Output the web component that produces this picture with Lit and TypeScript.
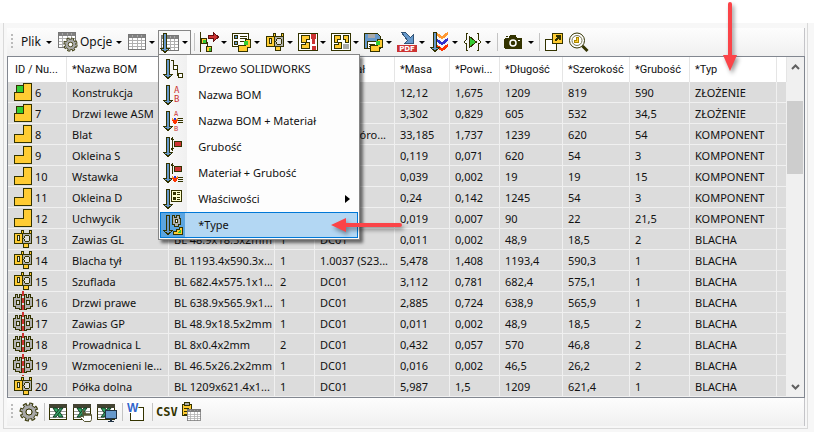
import { LitElement, html, svg, css, nothing } from "lit";
import type { TemplateResult } from "lit";
import { customElement } from "lit/decorators.js";

const INK = "#333300";
const GOLD = "#ffcc33";
const GREEN = "#33cc33";
const RED = "#cc3333";
const BLUE = "#6699cc";
const GREY = "#b2b2b2";

const sheetMetal = svg`
  <g stroke=${INK}>
    <path d="M7.5.5h2v3h-2zM15.5.5h2v3h-2z" fill=${GOLD} />
    <path d="M.5 3.5h8v10h-8z" fill=${GOLD} />
    <path d="M3.5 5.5h2v5h-2z" fill="#e8e8e8" />
    <path d="M8.5 3.5h9v10h-9z" fill=${GREY} />
    <path d="M9.5 13.5h5v4h-5z" fill=${GOLD} />
    <circle cx="13" cy="8.5" r="3" fill="#e0e0e0" />
  </g>`;

const downArrow = svg`<path d="M3.5.5h3v15h3l-4.5 4-4.5-4h3z" fill=${BLUE} stroke=${INK} />`;

const gridTable = svg`
  <path d="M0 0h18v16H0z" fill="#fff" />
  <path d="M4.5 4v12M9.5 4v12M13.5 4v12M0 6.5h18M0 9.5h18M0 12.5h18" stroke="#b0b0b0" />
  <path d="M0 0h18v4H0z" fill="#808080" />
  <path d="M4.5 1v2M9.5 1v2M13.5 1v2" stroke="#a8a8a8" />
  <path d="M.5.5h17v15H.5z" fill="none" stroke="#777" />`;

const gear = svg`
  <g fill="none" shape-rendering="auto">
    <circle cx="10" cy="10" r="7.5" stroke=${INK} stroke-width="4" stroke-dasharray="3.6 2.29" />
    <circle cx="10" cy="10" r="5" stroke=${INK} stroke-width="5" />
    <circle cx="10" cy="10" r="7" stroke="#a8a8a8" stroke-width="3" stroke-dasharray="1.8 3.7" stroke-dashoffset="-.7" />
    <circle cx="10" cy="10" r="5" stroke="#a8a8a8" stroke-width="3.4" />
    <circle cx="10" cy="10" r="3" stroke=${INK} fill="#fff" />
  </g>`;

const part = svg`<path d="M9.5.5h8v17H.5v-8h9z" fill=${GOLD} stroke=${INK} />`;
const smallPart = svg`
  <path d="M13.5 7.5h5v8h-3v4h-9v-6h7z" fill=${GOLD} stroke=${INK} />
  <path d="M12 9h4v4h-4z" fill=${GREEN} />`;

const excel = svg`
  <path d="M.5 1.5h17v15H.5z" fill="#fff" stroke=${INK} />
  <path d="M0 1h18v4H0z" fill="#444433" />
  <path d="M1 8.5h16M1 11.5h16M1 14.5h16" stroke="#999" />
  <path d="M4 5h4l6 9h-4z" fill="#33aa66" stroke="#123f22" shape-rendering="auto" />
  <path d="M11 5h3l-7 9H4z" fill="#339966" stroke="#123f22" shape-rendering="auto" />`;

const lines = (y: number) => svg`<path d="M15 ${y}.5h5M15 ${y + 2}.5h5M15 ${y + 4}.5h5" stroke=${INK} />`;
const flame = (y: number) => svg`
  <path d="M9 ${y}l3 5 3-5-2 2-1-2-1 2z" fill="#ff9933" stroke="#ff9933" />
  <path d="M10 ${y + 2}l2 3 2-3" fill="none" stroke="#ff3300" stroke-width="2" />
  <path d="M11 ${y + 1}h2" stroke="#3333cc" stroke-width="2" />`;

const icons: Record<string, TemplateResult> = {
  part: svg`${part}`,
  assembly: svg`${part}<path d="M2.5 2.5h7v7h-7z" fill=${GREEN} stroke=${INK} />`,
  sheet: svg`${sheetMetal}`,
  mirror: svg`
    <path d="M10 -2v22" stroke=${RED} stroke-width="2" stroke-dasharray="5 2" />
    <g fill=${GREY} stroke=${INK}>
      <path d="M2.5 4.5v-3h2v3h2v-3h2v15h-2v-1h-4v-2h-2v-9z" />
      <path d="M17.5 4.5v-3h-2v3h-2v-3h-2v15h2v-1h4v-2h2v-9z" />
      <path d="M3.5 7.5h3v4h-3zM13.5 7.5h3v4h-3z" fill="#ddd" />
    </g>`,
  options: svg`${gridTable}<g transform="translate(5 5) scale(.75)">${gear}</g>`,
  table: svg`<g transform="translate(1 2)">${gridTable}</g>`,
  sort: svg`<g transform="translate(1 2)">${gridTable}</g>${downArrow}`,
  tree: svg`
    <path d="M1.5 0v20M2 7.5h4M8.500 10v7h4" fill="none" stroke=${INK} />
    <path d="M2.5 6.5h5v5h-5zM7.5 14.5h5v5h-5z" fill=${GOLD} stroke=${INK} />
    <path d="M4 8h3v3h-3zM10 16h2v3h-2z" fill=${GREEN} />
    <path d="M9.5 3.5h5v-3l5 4.5-5 4.5v-3h-5z" fill=${RED} stroke="#661111" />`,
  form: svg`
    <path d="M.5 1.5h16v13H.5z" fill="#fff" stroke=${INK} />
    <path d="M2.5 3.5h3v3h-3zM2.5 9.5h3v3h-3z" fill=${BLUE} stroke=${INK} />
    <path d="M8 4.5h7M8 6.5h7M8 9.5h5" stroke=${INK} />${smallPart}`,
  sheetBig: svg`<g transform="translate(1 1)">${sheetMetal}</g>`,
  warn: svg`
    <path d="M.5 1.5h19v17H.5z" fill="#fff" stroke=${INK} />
    <path d="M3.5 3.5h8v4h-3v3h-5zM3.5 12.5h4v-2h4v6h-8z" fill=${GOLD} stroke=${INK} />
    <path d="M13 2h5l-1 10h-3zM14 14h4v4h-4z" fill=${RED} />`,
  layout: svg`
    <path d="M.5 1.5h19v17H.5z" fill="#fff" stroke=${INK} />
    <path d="M3.5 3.5h6v4h-3v3h-3zM12.5 3.5h5v7h-3v-3h-2zM3.5 12.5h4v-2h3v6h-7z" fill=${GOLD} stroke=${INK} />
    <path d="M12 12h6v5h-6z" fill="#aaa" />`,
  save: svg`
    <path d="M.5 1.5h13l3 3v12H.5z" fill=${BLUE} stroke=${INK} />
    <path d="M4 2h7v4h-7z" fill="#aaa" /><path d="M3.5 9.5h9v7h-9z" fill="#fff" stroke=${INK} />
    <path d="M5 12.5h6M5 14.5h6" stroke=${INK} />${smallPart}`,
  pdf: svg`
    <path d="M4.5.5h4l5 5 3-3v9h-9l3-3z" fill=${BLUE} stroke="#335577" />
    <path d="M0 13h20v7H0z" fill=${RED} />
    <text x="10" y="19" text-anchor="middle" font-family="DejaVu Sans" font-size="7" font-weight="bold" fill="#fff">PDF</text>`,
  layers: svg`
    <g fill="none" stroke-width="2.5">
      <path d="M7 2l5 4 6-5" stroke="#ff9933" /><path d="M7 8l5 4 6-5" stroke="#3333cc" />
      <path d="M7 14l5 4 6-5" stroke="#ff3300" />
    </g>${downArrow}`,
  play: svg`
    <path d="M5 1.5H3.5v6L1 10l2.5 2v6.500H5M14 1.500h1.500v6l2.500 2.500-2.500 2v6.500H14" fill="none" stroke=${INK} />
    <path d="M6.5 4.500l7 5.500-7 5.500z" fill=${GREEN} stroke=${INK} />`,
  camera: svg`
    <path d="M8 3h6l1 3h4l1 1v9l-1 1H3l-1-1V7l1-1h4z" fill=${INK} />
    <circle cx="11" cy="11" r="3" fill=${INK} stroke="#fff" stroke-width="1.500" shape-rendering="auto" />
    <path d="M4 4h2v1H4z" fill=${INK} /><path d="M16 8h2v1h-2z" fill="#fff" />`,
  popout: svg`
    <path d="M1.500 7.500h11v11h-11z" fill="#fff" stroke=${INK} />
    <path d="M8.500 1.500h10v10h-10z" fill=${GOLD} stroke=${INK} />
    <path d="M11 9l5-5M12 4h4v4" fill="none" stroke=${INK} stroke-width="1.500" />`,
  search: svg`
    <g shape-rendering="auto">
      <circle cx="9" cy="8.500" r="7.500" fill="#fff" stroke=${INK} />
      <circle cx="9" cy="8.500" r="5" fill="none" stroke="#777755" />
      <path d="M14.500 14l5 5" stroke=${INK} stroke-width="3" />
    </g>
    <path d="M8.500 5.500h2v5h-4v-2h2z" fill=${GOLD} stroke="#aa8800" />`,
  mTree: svg`${downArrow}<path d="M7.500 1.500h3v7h4v8h3" fill="none" stroke=${INK} />
    <path d="M10.500 6.500h4v4h-4zM15.500 14.500h4v4h-4z" fill="#fff" stroke=${INK} />`,
  mName: svg`${downArrow}<g font-family="DejaVu Sans Mono" font-size="9" fill=${RED}><text x="11" y="8">A</text><text x="11" y="17">B</text></g>`,
  mNameMat: svg`${downArrow}<g font-family="DejaVu Sans Mono" font-size="7" fill=${RED}><text x="11" y="5">A</text><text x="11" y="20">B</text></g>${flame(7)}${lines(7)}`,
  mThick: svg`${downArrow}<path d="M9.500 1v12M8 3l1.500-2L11 3M8 11l1.500 2 1.500-2" fill="none" stroke=${INK} /><path d="M11.500 4.500h7v5h-7z" fill=${RED} stroke=${INK} />`,
  mMatThick: svg`${downArrow}<path d="M9.500 1v10M8 3l1.500-2L11 3" fill="none" stroke=${INK} /><path d="M11.500 3.500h7v5h-7z" fill=${RED} stroke=${INK} />${flame(13)}${lines(14)}`,
  mProps: svg`${downArrow}<path d="M8.500 1.500h10v11h-10z" fill="#ffffcc" stroke=${INK} /><path d="M10 3h3v3h-3zM10 8h3v3h-3z" fill=${INK} /><path d="M14 3.500h3M14 5.500h3M14 8.500h3M14 10.500h3" stroke=${INK} />`,
  mType: svg`${downArrow}
    <path d="M9.500 3.500v-3h2v2h2v-2h3v3h1v6h-2v2h-4v-2h-2z" fill=${GREY} stroke=${INK} />
    <path d="M12.500 4.500h2v3h-2z" fill="#fff" stroke=${INK} />
    <path d="M10.500 19.500v-3h3v-2h3v-2h3v7z" fill=${GOLD} stroke=${INK} /><path d="M14 18l4-4v4z" fill=${GREEN} />`,
  gear: svg`${gear}`,
  excel: svg`<g transform="translate(0 1)">${excel}</g>`,
  excelHand: svg`<g transform="translate(0 1)">${excel}</g>
    <path d="M9.500 9.500v-1h1v5h1v-3h1v3h1v-2h1v2h1v-2h1v2h1v-1h1v5l-1 2h-6l-4-4v-1h2l1 1z" fill="#fff" stroke="#555533" shape-rendering="auto" />`,
  excelScreen: svg`<g transform="translate(0 1)">${excel}</g>
    <path d="M8.500 8.500h11v8h-11z" fill=${BLUE} stroke="#223344" /><path d="M13 17h2v2h2v1h-6v-1h2z" fill="#223344" />`,
  word: svg`<path d="M3.500 5.500h13v13h-13z" fill="#fff" stroke=${INK} />
    <text x="0" y="10" font-family="Liberation Sans" font-size="12" font-weight="bold" fill="#3366cc" stroke="#fff" stroke-width="2" paint-order="stroke">W</text>`,
  clipboard: svg`
    <path d="M1.500 2.500h9v11h-9z" fill=${GOLD} stroke=${INK} /><path d="M3.500.5h5v3h-5z" fill="#aaa" stroke=${INK} />
    <path d="M3 6.500h5M3 9.500h3M3 12.500h3" stroke=${INK} />
    <g transform="translate(6 7) scale(.77)">${gridTable}</g>`,
};

const icon = (name: string, size = 20) => html`
  <svg class="icon ${name}" width=${size} height=${size} viewBox="0 0 ${size} ${size}" shape-rendering="crispEdges" aria-hidden="true">${icons[name]}</svg>`;

const KOMPONENT = "KOMPONENT";
const BLACHA = "BLACHA";

/** [icon, number, name, dimensions, count, material, mass, area, length, width, thickness, type] */
const rows: string[][] = [
  ["assembly", "6", "Konstrukcja", "", "", "", "12,12", "1,675", "1209", "819", "590", "ZŁOŻENIE"],
  ["assembly", "7", "Drzwi lewe ASM", "", "", "", "3,302", "0,829", "605", "532", "34,5", "ZŁOŻENIE"],
  ["part", "8", "Blat", "", "", "Płyta wióro...", "33,185", "1,737", "1239", "620", "54", KOMPONENT],
  ["part", "9", "Okleina S", "", "", "", "0,119", "0,071", "620", "54", "3", KOMPONENT],
  ["part", "10", "Wstawka", "", "", "", "0,039", "0,002", "19", "19", "15", KOMPONENT],
  ["part", "11", "Okleina D", "", "", "", "0,24", "0,142", "1245", "54", "3", KOMPONENT],
  ["part", "12", "Uchwycik", "", "", "", "0,019", "0,007", "90", "22", "21,5", KOMPONENT],
  ["sheet", "13", "Zawias GL", "BL 48.9x18.5x2mm", "1", "DC01", "0,011", "0,002", "48,9", "18,5", "2", BLACHA],
  ["sheet", "14", "Blacha tył", "BL 1193.4x590.3x...", "1", "1.0037 (S23...", "5,478", "1,408", "1193,4", "590,3", "1", BLACHA],
  ["sheet", "15", "Szuflada", "BL 682.4x575.1x1...", "2", "DC01", "3,112", "0,781", "682,4", "575,1", "1", BLACHA],
  ["mirror", "16", "Drzwi prawe", "BL 638.9x565.9x1...", "1", "DC01", "2,885", "0,724", "638,9", "565,9", "1", BLACHA],
  ["mirror", "17", "Zawias GP", "BL 48.9x18.5x2mm", "1", "DC01", "0,011", "0,002", "48,9", "18,5", "2", BLACHA],
  ["mirror", "18", "Prowadnica L", "BL 8x0.4x2mm", "2", "DC01", "0,432", "0,057", "570", "46,8", "2", BLACHA],
  ["mirror", "19", "Wzmocenieni le...", "BL 46.5x26.2x2mm", "1", "DC01", "0,016", "0,002", "46,5", "26,2", "2", BLACHA],
  ["sheet", "20", "Półka dolna", "BL 1209x621.4x1...", "1", "DC01", "5,987", "1,5", "1209", "621,4", "1", BLACHA],
];

const headings = ["ID / Nu...", "*Nazwa BOM", "", "", "*Materiał", "*Masa", "*Powi...", "*Długość", "*Szerokość", "*Grubość", "*Typ", ""];

const menuItems: [string, string][] = [
  ["mTree", "Drzewo SOLIDWORKS"],
  ["mName", "Nazwa BOM"],
  ["mNameMat", "Nazwa BOM + Materiał"],
  ["mThick", "Grubość"],
  ["mMatThick", "Materiał + Grubość"],
  ["mProps", "Właściwości"],
  ["mType", "*Type"],
];

const caret = html`<span class="caret"></span>`;
const sep = html`<span class="sep"></span>`;

@customElement("app-root")
export class AppRoot extends LitElement {
  static styles = css`
    :host { display: block; min-height: 100vh; box-sizing: border-box; padding: 23px 6px 4px 3px; color: #111;
      font: 11px/16px "Noto Sans", "Open Sans", sans-serif; background: linear-gradient(#fff 23px, #f7f7f7 23px); }
    .panel { border: 1px solid #d9d9d9; border-top: 0; padding: 5px 2px 2px 3px; background: #f7f7f7; }
    button { font: inherit; color: inherit; background: none; border: 0; margin: 0; padding: 0; }
    .icon { display: block; flex: none; overflow: visible; }
    .bar { display: flex; align-items: center; height: 28px; background: linear-gradient(#fdfdfd, #f0f0f0);
      border-right: 1px solid #c4c4c8; }
    .grip { width: 2px; height: 16px; margin: 0 4px;
      background: repeating-linear-gradient(#bbb 0 2px, transparent 2px 4px); }
    .tool { display: flex; align-items: center; height: 24px; padding: 0 2px; box-sizing: border-box; }
    .drop { width: 33px; }
    .wide { width: 36px; justify-content: space-between; }
    .label { font-size: 12px; }
    .file { padding: 0 4px; gap: 3px; }
    .opts { padding: 0 3px 0 2px; gap: 2px; }
    .caret { border: 3px solid transparent; border-top-color: #000; border-bottom: 0; margin-left: 2px; }
    .sep { width: 1px; height: 18px; background: #c4c4c4; margin: 0 2px 0 3px; }
    .csv { font: bold 12px/16px "DejaVu Sans Mono", monospace; color: #333300; padding: 0 1px; }
    .anchor { position: relative; }
    .open { border: 1px solid #868686; border-bottom: 0; background: #f8f8f8; padding: 0 1px; }
    .menu { position: absolute; z-index: 2; top: 24px; left: 0; width: 202px; box-sizing: border-box; margin: 0; padding: 1px;
      list-style: none; border: 1px solid #868686; box-shadow: 3px 3px 3px #0008;
      background: linear-gradient(90deg, #fcfcfc, #f0f0f0 28px, #fdfdfd 28px); }
    .item { display: flex; align-items: center; width: 100%; height: 26px; padding: 0 8px 0 3px; gap: 15px; text-align: left;
      white-space: nowrap; }
    .text { flex: 1; }
    .sub { border: 4px solid transparent; border-left: 5px solid #000; border-right: 0; }
    .chosen { position: relative; background: #b3d7f3; box-shadow: inset 0 0 0 1px #0078d7; }
    .chosen .icon { background: #5ba5e0; outline: 2px solid #5ba5e0; }
    .chosen .point { background: none; }
    .point { position: absolute; overflow: visible; filter: drop-shadow(2px 3px 2px #0006); }
    .toMenu { left: 171px; top: 5px; z-index: 3; }
    .toType { left: 32px; bottom: 11px; z-index: 3; }
    .list { display: flex; border: 1px solid #828790; background: #fff; }
    table { flex: 1; min-width: 0; border-collapse: separate; border-spacing: 0; table-layout: fixed; }
    th, td { box-sizing: border-box; padding: 0 0 0 5px; text-align: left; font-weight: normal; white-space: nowrap; }
    th { position: relative; height: 25px; background: #fff; border-right: 1px solid #e5e5e5;
      font-family: Roboto, "Noto Sans", sans-serif; }
    td { height: 21px; padding-top: 2px; background: #dcdcdc; border-right: 1px solid #f0f0f0; border-bottom: 1px solid #f0f0f0; }
    th:first-child { padding-left: 7px; }
    td:first-child { padding: 0 0 0 6px; }
    .id { display: flex; align-items: center; gap: 3px; height: 20px; padding-top: 2px; box-sizing: border-box; }
    .id .icon { align-self: flex-start; margin-top: -1px; }
    .id .mirror { margin: -1px -1px 0; }
    .c0 { width: 59px; } .c1 { width: 102px; } .c2 { width: 106px; } .c3 { width: 40px; }
    .c4 { width: 80px; } .c5 { width: 55px; } .c6 { width: 50px; } .c7 { width: 63px; }
    .c8 { width: 67px; } .c9 { width: 60px; } .c10 { width: 87px; } .c11 { width: auto; }
    .scroll { flex: none; width: 17px; display: flex; flex-direction: column; background: #f0f0f0; }
    .step { height: 20px; display: grid; place-items: center; }
    .track { flex: 1; padding: 24px 1px 0 0; }
    .thumb { height: 73px; background: #cdcdcd; }
  `;

  private drop(name: string, label: string, wide = false) {
    return html`<button class="tool ${wide ? "wide" : "drop"}" aria-label=${label}>${icon(name)}${caret}</button>`;
  }

  private tool(name: string, label: string) {
    return html`<button class="tool" aria-label=${label}>${icon(name)}</button>`;
  }

  private menu() {
    return html`<ul class="menu" role="menu">
      ${menuItems.map(([name, label], i) => {
        const chosen = i === menuItems.length - 1;
        return html`<li role="none">
          <button class="item ${chosen ? "chosen" : ""}" role="menuitem">
            ${icon(name)}<span class="text">${label}</span>
            ${name === "mProps" ? html`<span class="sub"></span>` : nothing}
            ${chosen
              ? html`<svg class="point toMenu" width="71" height="16" viewBox="0 0 71 16" aria-hidden="true">
                  <path d="M0 8L15 1v5h54a2 2 0 010 4H15v5z" fill="#fb4448" />
                </svg>`
              : nothing}
          </button>
        </li>`;
      })}
    </ul>`;
  }

  render() {
    return html`
      <main class="panel">
        <div class="bar" role="toolbar">
          <span class="grip"></span>
          <button class="tool file label">Plik${caret}</button>
          <button class="tool opts label">${icon("options")}Opcje${caret}</button>
          ${this.drop("table", "Tabela")}
          <div class="anchor">
            <button class="tool drop open" aria-label="Sortowanie" aria-expanded="true">${icon("sort")}${caret}</button>
            ${this.menu()}
          </div>
          ${sep}
          ${this.drop("tree", "Drzewo")} ${this.drop("form", "Formularz")} ${this.drop("sheetBig", "Blacha")}
          ${this.drop("warn", "Ostrzeżenia")} ${this.drop("layout", "Układ")} ${this.drop("save", "Zapisz")}
          ${this.drop("pdf", "PDF")} ${this.drop("layers", "Warstwy")} ${this.drop("play", "Uruchom")}
          ${sep}${this.drop("camera", "Zdjęcie", true)}${sep}
          ${this.tool("popout", "Nowe okno")} ${this.tool("search", "Szukaj")}
        </div>
        <div class="list">
          <table>
            <colgroup>${headings.map((_, i) => html`<col class="c${i}" />`)}</colgroup>
            <thead>
              <tr>
                ${headings.map((h) => html`<th scope="col">${h}${h === "*Typ"
                  ? html`<svg class="point toType" width="16" height="70" viewBox="0 0 16 70" aria-hidden="true">
                      <path d="M8 70L1 54h5V3a2 2 0 014 0v51h5z" fill="#fb4448" />
                    </svg>`
                  : nothing}</th>`)}
              </tr>
            </thead>
            <tbody>
              ${rows.map(([name, id, ...cells]) => html`<tr>
                <td><span class="id">${icon(name, name === "mirror" ? 20 : 18)}${id}</span></td>
                ${cells.map((c) => html`<td>${c}</td>`)}
                <td></td>
              </tr>`)}
            </tbody>
          </table>
          <div class="scroll">
            <button class="step" aria-label="W górę"><svg width="9" height="6" viewBox="0 0 9 6"><path d="M1 5l3.500-3.500L8 5" fill="none" stroke="#606060" stroke-width="2" /></svg></button>
            <div class="track"><div class="thumb"></div></div>
            <button class="step" aria-label="W dół"><svg width="9" height="6" viewBox="0 0 9 6"><path d="M1 1l3.500 3.500L8 1" fill="none" stroke="#606060" stroke-width="2" /></svg></button>
          </div>
        </div>
        <div class="bar" role="toolbar">
          <span class="grip"></span>
          ${this.tool("gear", "Ustawienia")}${sep}
          ${this.tool("excel", "Excel")} ${this.tool("excelHand", "Excel ręcznie")} ${this.tool("excelScreen", "Excel na ekranie")}
          ${sep}${this.tool("word", "Word")}${sep}
          <button class="tool csv">CSV</button>
          ${this.tool("clipboard", "Schowek")}
        </div>
      </main>
    `;
  }
}
